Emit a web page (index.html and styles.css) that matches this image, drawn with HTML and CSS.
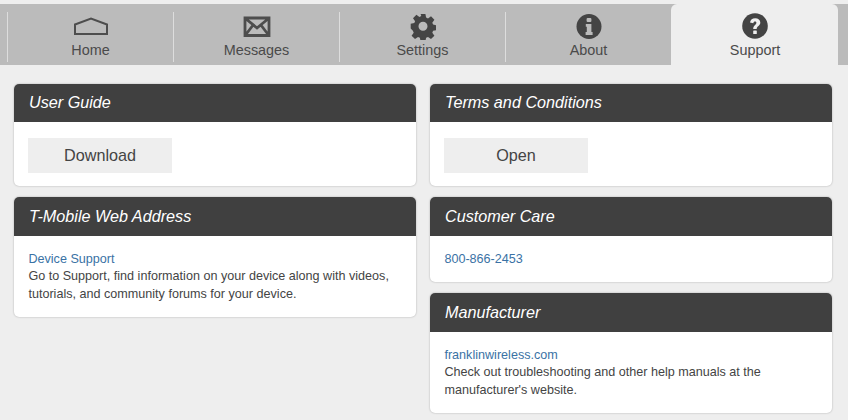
FILE: index.html
```html
<!DOCTYPE html>
<html lang="en">
  <head>
    <meta charset="UTF-8" />
    <meta name="viewport" content="width=device-width, initial-scale=1.0" />
    <title>Support</title>
    <link rel="stylesheet" href="styles.css">
  </head>
  <body>
    <nav class="tabs">
      <a class="tab" href="#">
        <span class="tab-inner">
          <svg class="tab-icon" width="36" height="28" viewBox="0 0 36 28">
            <path d="M2 12.5 L18 6.5 L34 12.5 V22 H2 Z" fill="none" stroke="#4d4d4d" stroke-width="2" />
          </svg>
          Home
        </span>
      </a>
      <a class="tab" href="#">
        <span class="tab-inner">
          <svg class="tab-icon" width="28" height="28" viewBox="0 0 28 28">
            <path d="M2 6 H26 V23.5 H2 Z M2.5 6.5 L14 16 L25.5 6.5 M2.5 23 L10.5 12.5 M25.5 23 L17.5 12.5" fill="none" stroke="#4d4d4d" stroke-width="2.8" />
          </svg>
          Messages
        </span>
      </a>
      <a class="tab" href="#">
        <span class="tab-inner">
          <svg class="tab-icon" width="26" height="28" viewBox="0 0 26 28">
            <path fill-rule="evenodd" fill="#444" d="M10.6 2h4.8l.7 3.6 1.9.8 3-2.1 3.4 3.4-2.1 3 .8 1.9 3.6.7v4.8l-3.6.7-.8 1.9 2.1 3-3.4 3.4-3-2.1-1.9.8-.7 3.6h-4.8l-.7-3.6-1.9-.8-3 2.1-3.4-3.4 2.1-3-.8-1.9L0.7 16.6v-4.8l3.6-.7.8-1.9-2.1-3 3.4-3.4 3 2.1 1.9-.8z M13 9.7a4.5 4.5 0 1 0 0 9 4.5 4.5 0 1 0 0-9z" />
          </svg>
          Settings
        </span>
      </a>
      <a class="tab" href="#">
        <span class="tab-inner">
          <svg class="tab-icon" width="26" height="28" viewBox="0 0 26 28">
            <circle cx="13" cy="14.5" r="12.5" fill="#444" />
            <rect x="10.6" y="6" width="4.8" height="4" rx="1" fill="#bbb" />
            <path d="M9.8 12 H15.4 V20 H16.6 V23 H9.6 V20 H10.8 V14.8 H9.8 Z" fill="#bbb" />
          </svg>
          About
        </span>
      </a>
      <a class="tab tab-active" href="#">
        <span class="tab-inner">
          <svg class="tab-icon" width="28" height="28" viewBox="0 0 28 28">
            <circle cx="14" cy="14" r="12.8" fill="#444" />
            <path d="M9 10.6 C9.4 7.6 11.4 6.2 14.2 6.2 C17.2 6.2 19.3 8 19.3 10.5 C19.3 13.9 15.7 14 15.7 17 H12.2 C12.2 13.2 15.4 13 15.4 10.8 C15.4 9.9 14.8 9.4 14 9.4 C13.1 9.4 12.5 10 12.3 11.2 Z" fill="#eee" />
            <rect x="12.2" y="18.4" width="3.6" height="3.6" rx=".6" fill="#eee" />
          </svg>
          Support
        </span>
      </a>
    </nav>

    <main class="columns">
      <div class="column">
        <section class="card card-button">
          <h2>User Guide</h2>
          <div class="card-body">
            <button>Download</button>
          </div>
        </section>
        <section class="card">
          <h2>T-Mobile Web Address</h2>
          <div class="card-body">
            <a href="#">Device Support</a>
            <p>Go to Support, find information on your device along with videos, tutorials, and community forums for your device.</p>
          </div>
        </section>
      </div>

      <div class="column">
        <section class="card card-button">
          <h2>Terms and Conditions</h2>
          <div class="card-body">
            <button>Open</button>
          </div>
        </section>
        <section class="card">
          <h2>Customer Care</h2>
          <div class="card-body">
            <a href="#">800-866-2453</a>
          </div>
        </section>
        <section class="card">
          <h2>Manufacturer</h2>
          <div class="card-body">
            <a href="#">franklinwireless.com</a>
            <p>Check out troubleshooting and other help manuals at the manufacturer's website.</p>
          </div>
        </section>
      </div>
    </main>
  </body>
</html>
```

FILE: styles.css
```css
body {
  font-family: "Liberation Sans", Arial, sans-serif;
  margin: 0;
  padding: 0;
  height: 420px;
  overflow: hidden;
  background-color: #eee;
  color: #444;
}

.tabs {
  display: flex;
  margin-top: 4px;
  height: 61px;
  padding-left: 7px;
  background-color: #bbb;
}

.tab {
  width: 166px;
  height: 61px;
  box-sizing: border-box;
  padding-top: 8px;
  color: #4a4a4a;
  font-size: 14.4px;
  text-decoration: none;
}

.tab-inner {
  display: flex;
  flex-direction: column;
  align-items: center;
  height: 50px;
  line-height: 16px;
  border-left: 1px solid #ddd;
}

.tab-icon {
  display: block;
  margin-bottom: 2px;
}

.tab-active {
  width: 167px;
  background-color: #eee;
  border-radius: 6px 6px 0 0;
}

.tab-active .tab-inner {
  border-left-color: transparent;
}

.columns {
  display: grid;
  grid-template-columns: 402px 402px;
  gap: 14px;
  padding: 19px 14px 0;
}

.column {
  display: flex;
  flex-direction: column;
  gap: 11px;
}

.card {
  background-color: #fff;
  border-radius: 5px;
  overflow: hidden;
  box-shadow: 0 0 2px rgba(0, 0, 0, 0.3);
}

.card h2 {
  margin: 0;
  padding: 0 15px;
  height: 39px;
  line-height: 39px;
  background-color: #404040;
  color: #fff;
  font-size: 16.2px;
  font-style: italic;
  font-weight: normal;
}

.card-body {
  padding: 14.5px 14.4px 14px;
  font-size: 12.6px;
  line-height: 17.5px;
}

.card-body a {
  display: block;
  color: #3a72a5;
  text-decoration: none;
}

.card-body p {
  margin: 0;
}

.card-button h2 {
  height: 38px;
  line-height: 37px;
}

.card-button .card-body {
  padding: 16px 14px 13px;
}

.card button {
  display: block;
  width: 144px;
  height: 35px;
  padding: 0;
  border: none;
  background-color: #eee;
  color: #444;
  font-family: inherit;
  font-size: 16.2px;
}
```
